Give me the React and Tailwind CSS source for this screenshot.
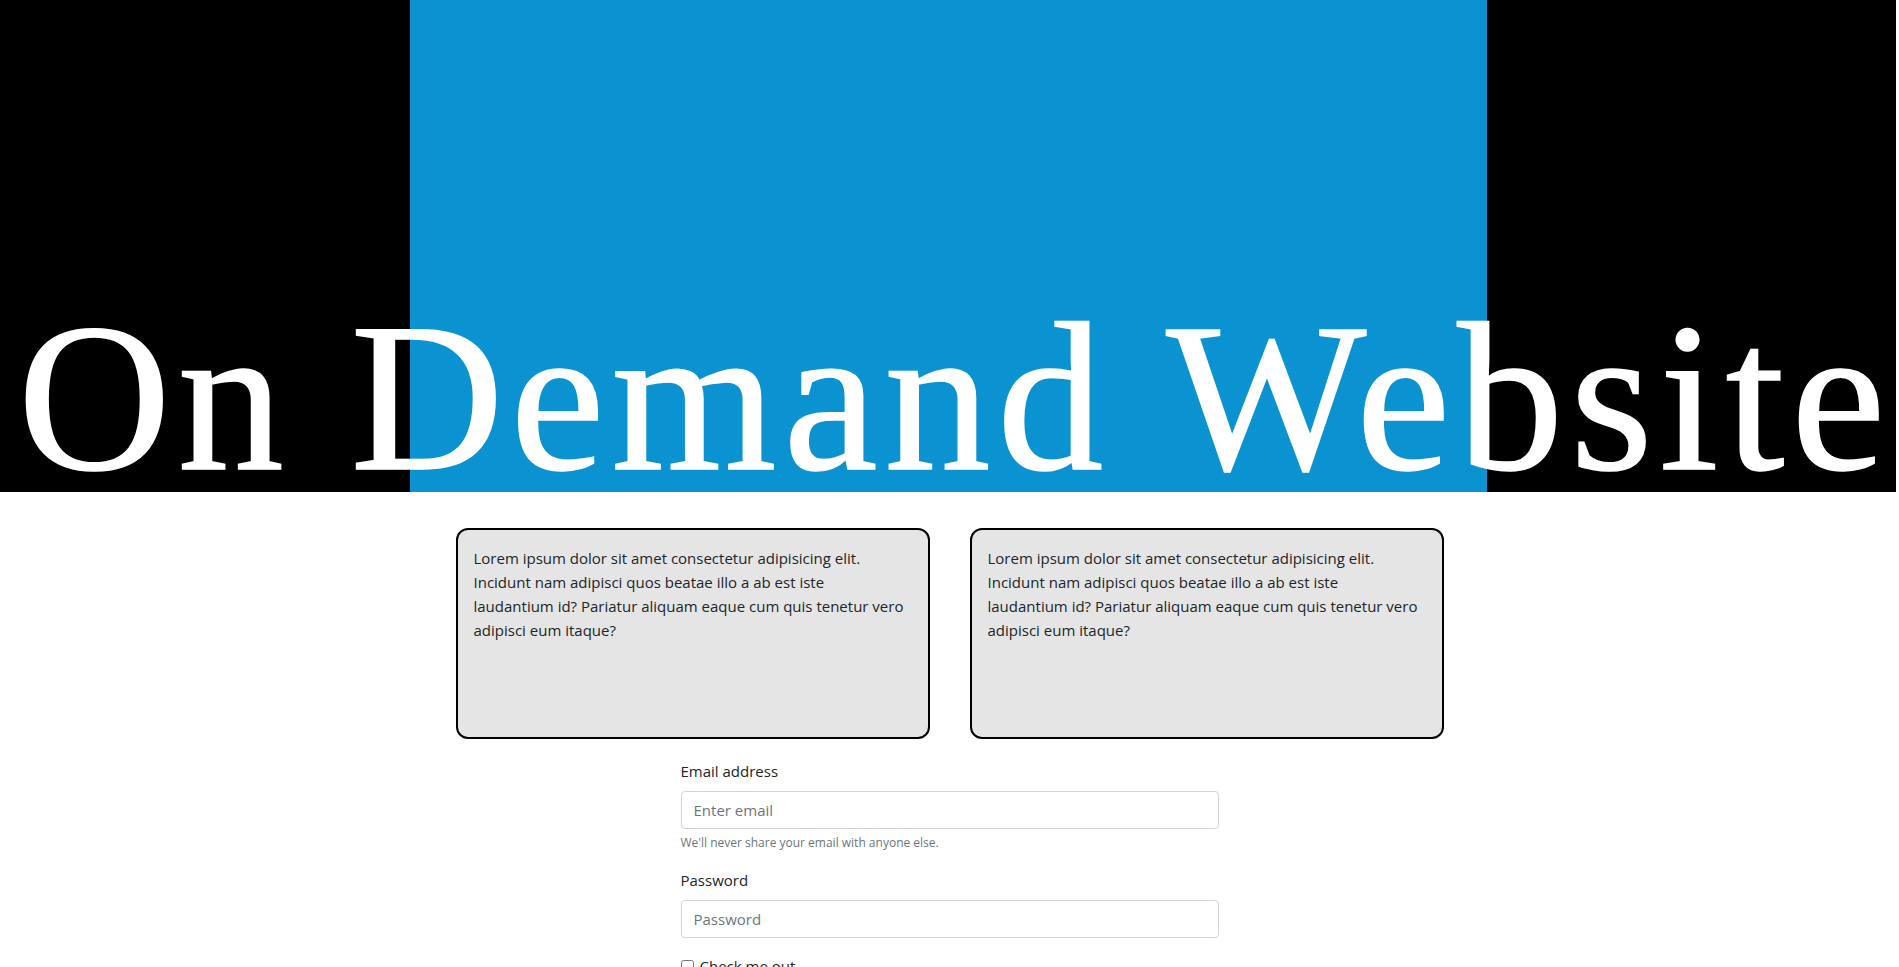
export default function App() {
  const lorem =
    "Lorem ipsum dolor sit amet consectetur adipisicing elit. Incidunt nam adipisci quos beatae illo a ab est iste laudantium id? Pariatur aliquam eaque cum quis tenetur vero adipisci eum itaque?";

  return (
    <div className="min-h-screen bg-white font-['Open_Sans',sans-serif] text-[#212529]">
      {/* Hero */}
      <header className="grid h-[492px] w-[1896px] overflow-hidden bg-black">
        <div className="col-start-1 row-start-1 flex justify-center">
          <div className="h-full w-[1077px] bg-[#0a93d0]" />
        </div>
        <h1 className="col-start-1 row-start-1 whitespace-nowrap pt-[304px] pl-[14px] text-center font-['Liberation_Serif',serif] text-[212px] leading-[188px] font-normal tracking-[6.9px] text-white [-webkit-text-stroke:1.5px_white]">
          On Demand Website
        </h1>
      </header>

      {/* Cards */}
      <section className="mt-[36px] flex justify-center gap-[40px]">
        {[0, 1].map((i) => (
          <div
            key={i}
            className="h-[211px] w-[474px] rounded-[12px] border-2 border-black bg-[#e5e5e5] py-4 pl-4 pr-[22px] text-[15px] leading-6"
          >
            {lorem}
          </div>
        ))}
      </section>

      {/* Form */}
      <form className="mx-auto mt-[20px] w-[538px] text-[15px]">
        <div className="mb-4">
          <label className="mb-2 block leading-6">Email address</label>
          <input
            type="email"
            placeholder="Enter email"
            className="block h-[38px] w-full rounded border border-[#ced4da] px-3 text-[15px] placeholder:text-[#6c757d]"
          />
          <small className="mt-1 block text-[12px] leading-[19px] text-[#6c757d]">
            We'll never share your email with anyone else.
          </small>
        </div>
        <div className="mb-4">
          <label className="mb-2 block leading-6">Password</label>
          <input
            type="password"
            placeholder="Password"
            className="block h-[38px] w-full rounded border border-[#ced4da] px-3 text-[15px] placeholder:text-[#6c757d]"
          />
        </div>
        <div className="flex items-center gap-[6px] leading-6">
          <input type="checkbox" className="h-[13px] w-[13px]" />
          <label>Check me out</label>
        </div>
      </form>
    </div>
  );
}
